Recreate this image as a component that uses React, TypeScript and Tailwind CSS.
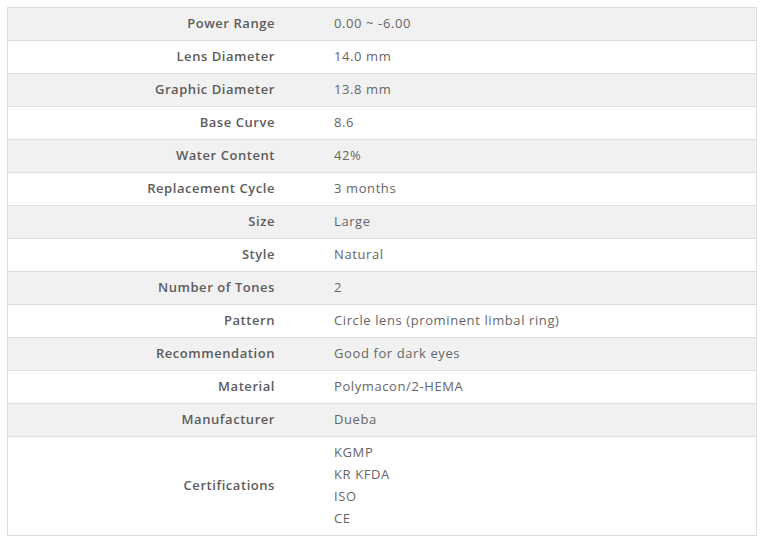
import React from 'react';

interface SpecRow {
  label: string;
  value: string | string[];
}

const specs: SpecRow[] = [
  { label: 'Power Range', value: '0.00 ~ -6.00' },
  { label: 'Lens Diameter', value: '14.0 mm' },
  { label: 'Graphic Diameter', value: '13.8 mm' },
  { label: 'Base Curve', value: '8.6' },
  { label: 'Water Content', value: '42%' },
  { label: 'Replacement Cycle', value: '3 months' },
  { label: 'Size', value: 'Large' },
  { label: 'Style', value: 'Natural' },
  { label: 'Number of Tones', value: '2' },
  { label: 'Pattern', value: 'Circle lens (prominent limbal ring)' },
  { label: 'Recommendation', value: 'Good for dark eyes' },
  { label: 'Material', value: 'Polymacon/2-HEMA' },
  { label: 'Manufacturer', value: 'Dueba' },
  { label: 'Certifications', value: ['KGMP', 'KR KFDA', 'ISO', 'CE'] },
];

const App: React.FC = () => {
  return (
    <div
      className="w-[763px] h-[543px] bg-white pt-[7px] pl-[7px]"
      style={{ fontFamily: '"Open Sans", "Noto Sans", sans-serif' }}
    >
      <div className="w-[750px] border-x border-b border-[#dedede]">
        {specs.map((row, i) => (
          <div
            key={row.label}
            className={`flex items-center border-t border-[#dedede] ${
              i % 2 === 0 ? 'bg-[#f1f1f1]' : 'bg-white'
            } ${Array.isArray(row.value) ? 'h-[99px]' : 'h-[33px]'}`}
          >
            <div className="w-[287px] shrink-0 pr-[20px] text-right text-[13px] font-semibold text-[#5c5c5c] tracking-[0.55px]">
              {row.label}
            </div>
            <div className="pl-[39px] text-[13px] text-[#666] tracking-[0.6px]">
              {Array.isArray(row.value) ? (
                <div className="mb-[2px]">
                  {row.value.map((v) => (
                    <div key={v} className="leading-[22px]">
                      {v}
                    </div>
                  ))}
                </div>
              ) : (
                row.value
              )}
            </div>
          </div>
        ))}
      </div>
    </div>
  );
};

export default App;
